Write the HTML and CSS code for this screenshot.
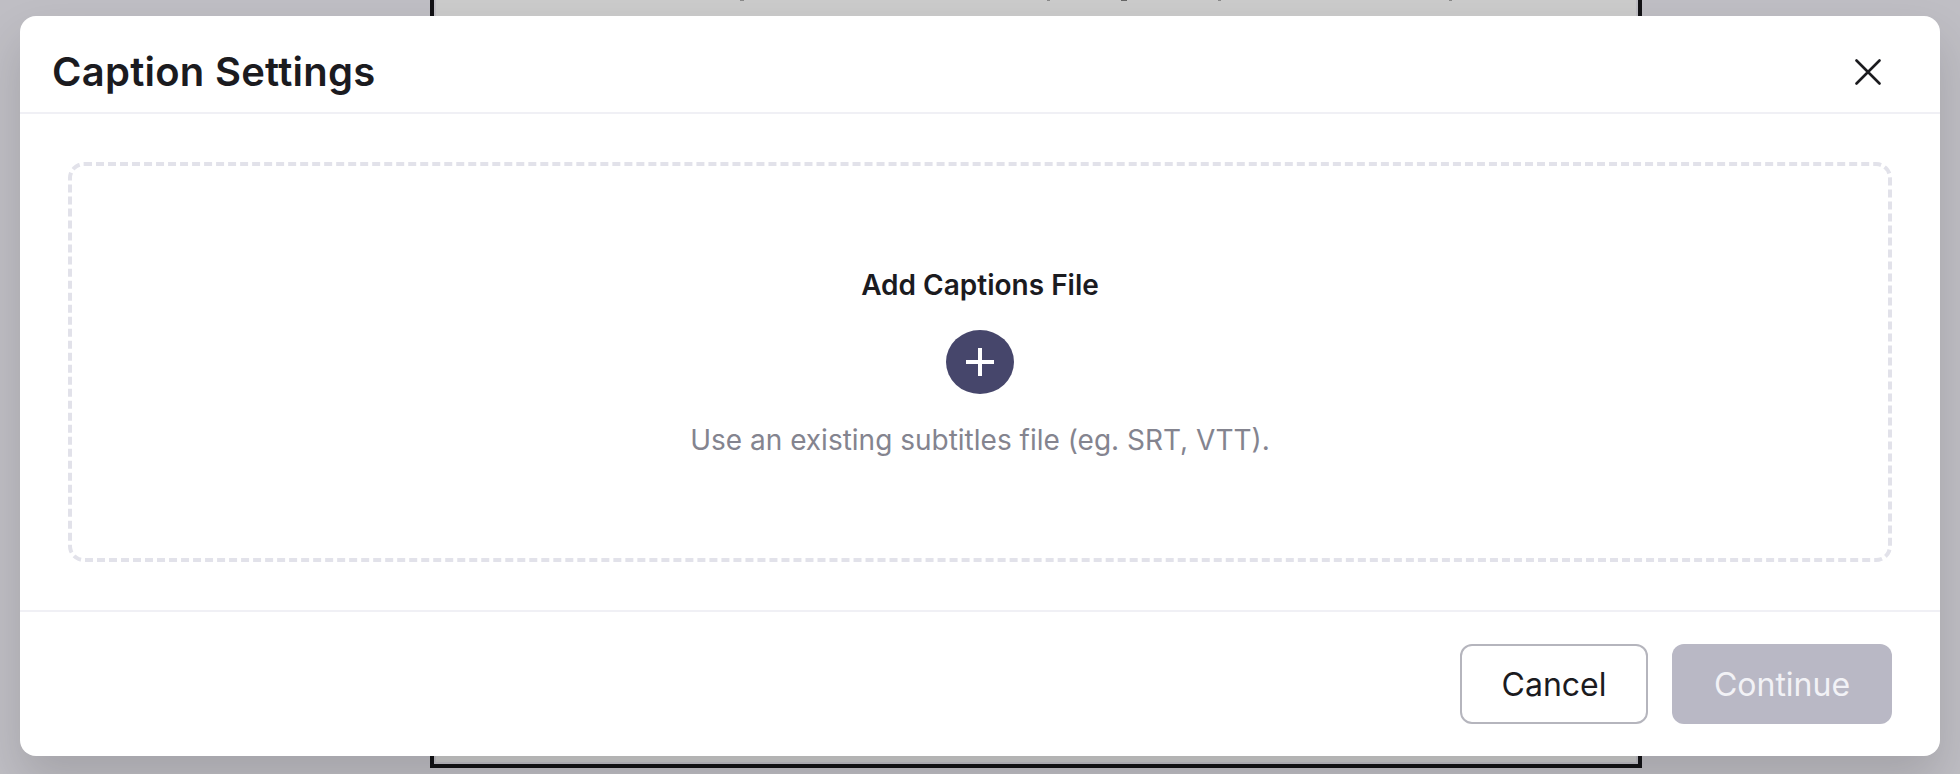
FILE: index.html
```html
<!DOCTYPE html>
<html lang="en">
<head>
    <meta charset="UTF-8">
    <meta name="viewport" content="width=device-width, initial-scale=1.0">
    <title>Caption Settings</title>
    <link rel="stylesheet" href="styles.css">
</head>
<body>
    <div class="frame">
        <div class="frame-inner"></div>
    </div>

    <div class="modal">
        <header class="modal-header">
            <h1>Caption Settings</h1>
            <button class="close-btn" aria-label="Close">
                <svg width="26" height="26" viewBox="0 0 26 26" fill="none" stroke="#1b1b1f" stroke-width="2.6" stroke-linecap="round">
                    <path d="M1.5 1.5L24.5 24.5M24.5 1.5L1.5 24.5"/>
                </svg>
            </button>
        </header>

        <div class="modal-body">
            <div class="dropzone">
                <h2>Add Captions File</h2>
                <button class="add-btn" aria-label="Add">
                    <svg width="28" height="28" viewBox="0 0 28 28" fill="none" stroke="#fff" stroke-width="4">
                        <path d="M14 0V28M0 14H28"/>
                    </svg>
                </button>
                <p>Use an existing subtitles file (eg. SRT, VTT).</p>
            </div>
        </div>

        <footer class="modal-footer">
            <button class="btn btn-cancel">Cancel</button>
            <button class="btn btn-continue" disabled>Continue</button>
        </footer>
    </div>
</body>
</html>
```

FILE: styles.css
```css
* {
    box-sizing: border-box;
}
body {
    margin: 0;
    height: 774px;
    overflow: hidden;
    background-color: #bfbec4;
    font-family: Inter, "Liberation Sans", sans-serif;
    color: #1b1b1f;
    display: flex;
    align-items: flex-end;
    padding: 0 0 6px 430px;
}
button {
    font-family: inherit;
}

/* page behind the dialog */
.frame {
    width: 1212px;
    height: 800px;
    flex-shrink: 0;
    border: 4px solid #131316;
    padding: 2px;
}
.frame-inner {
    height: 100%;
    background-color: #cbcbcb;
    background-image:
        linear-gradient(#8a8a8a, #8a8a8a),
        linear-gradient(#8a8a8a, #8a8a8a),
        linear-gradient(#666, #666),
        linear-gradient(#8a8a8a, #8a8a8a),
        linear-gradient(#8a8a8a, #8a8a8a);
    background-repeat: no-repeat;
    background-size: 4px 1px, 3px 1px, 6px 1px, 3px 1px, 3px 1px;
    background-position: 304px 26px, 611px 26px, 685px 26px, 782px 26px, 1013px 26px;
}

/* dialog */
.modal {
    position: absolute;
    left: 20px;
    top: 16px;
    width: 1920px;
    height: 740px;
    display: flex;
    flex-direction: column;
    background: #fff;
    border-radius: 16px;
    box-shadow: 0 24px 48px rgba(0, 0, 0, 0.14);
}
.modal-header {
    height: 98px;
    flex-shrink: 0;
    display: flex;
    justify-content: space-between;
    align-items: center;
    padding: 16px 59px 0 32px;
    border-bottom: 2px solid #f0f0f5;
}
.modal-header h1 {
    margin: 0;
    font-size: 40px;
    font-weight: 600;
    letter-spacing: 0.25px;
    line-height: 48px;
}
.close-btn {
    width: 26px;
    height: 26px;
    padding: 0;
    border: 0;
    background: none;
    display: flex;
}
.modal-body {
    flex: 1;
    padding: 48px 48px;
    border-bottom: 2px solid #f0f0f5;
}
.dropzone {
    height: 400px;
    border: 4px dashed #e2e2ea;
    border-radius: 16px;
    display: flex;
    flex-direction: column;
    align-items: center;
    justify-content: center;
}
.dropzone h2 {
    margin: 0 0 27px;
    font-size: 28px;
    font-weight: 600;
    line-height: 36px;
}
.add-btn {
    width: 68px;
    height: 64px;
    padding: 0;
    border: 0;
    border-radius: 50%;
    background: #46466b;
    display: flex;
    align-items: center;
    justify-content: center;
}
.dropzone p {
    margin: 28px 0 0;
    font-size: 28px;
    line-height: 36px;
    color: #84848f;
}
.modal-footer {
    height: 146px;
    flex-shrink: 0;
    display: flex;
    justify-content: flex-end;
    gap: 24px;
    padding: 32px 48px 0 0;
}
.btn {
    height: 80px;
    font-size: 32px;
    border-radius: 12px;
}
.btn-cancel {
    width: 188px;
    background: #fff;
    color: #1b1b1f;
    border: 2px solid #b5b5bd;
}
.btn-continue {
    width: 220px;
    background: #b9b8c5;
    color: #f2f2f6;
    border: 0;
}
```
